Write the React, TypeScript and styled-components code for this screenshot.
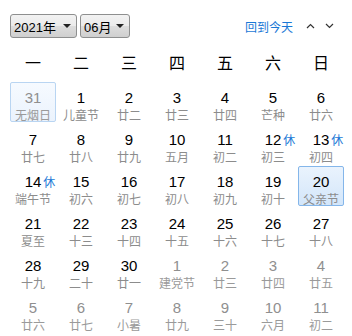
import React from 'react';
import styled, { createGlobalStyle, css } from 'styled-components';

const GlobalStyle = createGlobalStyle`
  body {
    margin: 0;
    background: #ffffff;
    font-family: 'Liberation Sans', 'Noto Sans CJK SC', sans-serif;
  }
`;

type Day = { d: number; sub: string; other?: boolean; rest?: boolean; sel?: 'prev' | 'cur' };

const weeks: Day[][] = [
  [
    { d: 31, sub: '无烟日', other: true, sel: 'prev' },
    { d: 1, sub: '儿童节' },
    { d: 2, sub: '廿二' },
    { d: 3, sub: '廿三' },
    { d: 4, sub: '廿四' },
    { d: 5, sub: '芒种' },
    { d: 6, sub: '廿六' },
  ],
  [
    { d: 7, sub: '廿七' },
    { d: 8, sub: '廿八' },
    { d: 9, sub: '廿九' },
    { d: 10, sub: '五月' },
    { d: 11, sub: '初二' },
    { d: 12, sub: '初三', rest: true },
    { d: 13, sub: '初四', rest: true },
  ],
  [
    { d: 14, sub: '端午节', rest: true },
    { d: 15, sub: '初六' },
    { d: 16, sub: '初七' },
    { d: 17, sub: '初八' },
    { d: 18, sub: '初九' },
    { d: 19, sub: '初十' },
    { d: 20, sub: '父亲节', sel: 'cur' },
  ],
  [
    { d: 21, sub: '夏至' },
    { d: 22, sub: '十三' },
    { d: 23, sub: '十四' },
    { d: 24, sub: '十五' },
    { d: 25, sub: '十六' },
    { d: 26, sub: '十七' },
    { d: 27, sub: '十八' },
  ],
  [
    { d: 28, sub: '十九' },
    { d: 29, sub: '二十' },
    { d: 30, sub: '廿一' },
    { d: 1, sub: '建党节', other: true },
    { d: 2, sub: '廿三', other: true },
    { d: 3, sub: '廿四', other: true },
    { d: 4, sub: '廿五', other: true },
  ],
  [
    { d: 5, sub: '廿六', other: true },
    { d: 6, sub: '廿七', other: true },
    { d: 7, sub: '小暑', other: true },
    { d: 8, sub: '廿九', other: true },
    { d: 9, sub: '三十', other: true },
    { d: 10, sub: '六月', other: true },
    { d: 11, sub: '初二', other: true },
  ],
];

const weekNames = ['一', '二', '三', '四', '五', '六', '日'];

const Chevron = ({ up }: { up?: boolean }) => (
  <svg width="9" height="6" viewBox="0 0 9 6">
    <path
      d={up ? 'M1 5 L4.5 1.5 L8 5' : 'M1 1 L4.5 4.5 L8 1'}
      fill="none"
      stroke="#333"
      strokeWidth="1.2"
    />
  </svg>
);

const App = () => {
  return (
    <>
      <GlobalStyle />
      <Calendar>
        <Toolbar>
          <Selects>
            <Select $w={67}>
              <span>2021年</span>
              <Arrow />
            </Select>
            <Select $w={50}>
              <span>06月</span>
              <Arrow />
            </Select>
          </Selects>
          <Nav>
            <TodayLink>回到今天</TodayLink>
            <NavBtn>
              <Chevron up />
            </NavBtn>
            <NavBtn>
              <Chevron />
            </NavBtn>
          </Nav>
        </Toolbar>
        <WeekRow>
          {weekNames.map((w) => (
            <WeekName key={w}>{w}</WeekName>
          ))}
        </WeekRow>
        <Grid>
          {weeks.flat().map((day, i) => (
            <Cell key={i} $sel={day.sel}>
              <Num $other={day.other}>
                {day.d}
                {day.rest && <Rest>休</Rest>}
              </Num>
              <Sub $other={day.other}>{day.sub}</Sub>
            </Cell>
          ))}
        </Grid>
      </Calendar>
    </>
  );
};

export default App;

const Calendar = styled.div`
  width: 336px;
  padding: 14px 7px 0 9px;
`;

const Toolbar = styled.div`
  display: flex;
  align-items: center;
  justify-content: space-between;
  height: 24px;
`;

const Selects = styled.div`
  display: flex;
  gap: 3px;
  padding-left: 1px;
`;

const Select = styled.div<{ $w: number }>`
  box-sizing: border-box;
  width: ${(p) => p.$w}px;
  height: 24px;
  display: flex;
  align-items: center;
  justify-content: space-between;
  padding: 0 5px 0 3px;
  border: 1px solid #8e8f8f;
  border-radius: 3px;
  background: linear-gradient(#f2f2f2, #ebebeb 50%, #dddddd 51%, #cfcfcf);
  font-size: 13px;
  color: #000;
`;

const Arrow = styled.span`
  width: 0;
  height: 0;
  border-left: 4px solid transparent;
  border-right: 4px solid transparent;
  border-top: 4px solid #222;
`;

const Nav = styled.div`
  display: flex;
  align-items: center;
  gap: 9px;
  padding-right: 11px;
`;

const TodayLink = styled.span`
  font-size: 12px;
  color: #1a78d6;
  margin-right: 3px;
`;

const NavBtn = styled.span`
  display: flex;
  width: 10px;
  justify-content: center;
`;

const WeekRow = styled.div`
  display: grid;
  grid-template-columns: repeat(7, 48px);
  height: 28px;
  margin-top: 10px;
  align-items: center;
`;

const WeekName = styled.div`
  text-align: center;
  font-size: 16px;
  color: #000;
  font-family: 'Noto Sans CJK SC', sans-serif;
`;

const Grid = styled.div`
  display: grid;
  grid-template-columns: repeat(7, 48px);
  grid-auto-rows: 42px;
  margin-top: 5px;
`;

const Cell = styled.div<{ $sel?: 'prev' | 'cur' }>`
  box-sizing: border-box;
  margin: 1px;
  border: 1px solid transparent;
  border-radius: 2px;
  text-align: center;
  padding-top: 8px;
  ${(p) =>
    p.$sel === 'prev' &&
    css`
      border-color: #b9d5f2;
      background: linear-gradient(#f6faff, #ebf3fd);
    `}
  ${(p) =>
    p.$sel === 'cur' &&
    css`
      border-color: #84b6ea;
      background: linear-gradient(#eaf3fd, #d3e6fa);
    `}
`;

const Num = styled.div<{ $other?: boolean }>`
  position: relative;
  display: inline-block;
  font-size: 15px;
  line-height: 14px;
  height: 14px;
  vertical-align: top;
  color: ${(p) => (p.$other ? '#8f8f8f' : '#000')};
`;

const Rest = styled.span`
  position: absolute;
  left: 100%;
  top: 0;
  margin-left: 2px;
  font-size: 12px;
  line-height: 14px;
  color: #1a78d6;
  font-family: 'Noto Sans CJK SC', sans-serif;
`;

const Sub = styled.div<{ $other?: boolean }>`
  font-size: 12px;
  line-height: 12px;
  color: ${(p) => (p.$other ? '#9a9a9a' : '#8c8c8c')};
  font-family: 'Noto Sans CJK SC', sans-serif;
  white-space: nowrap;
`;
